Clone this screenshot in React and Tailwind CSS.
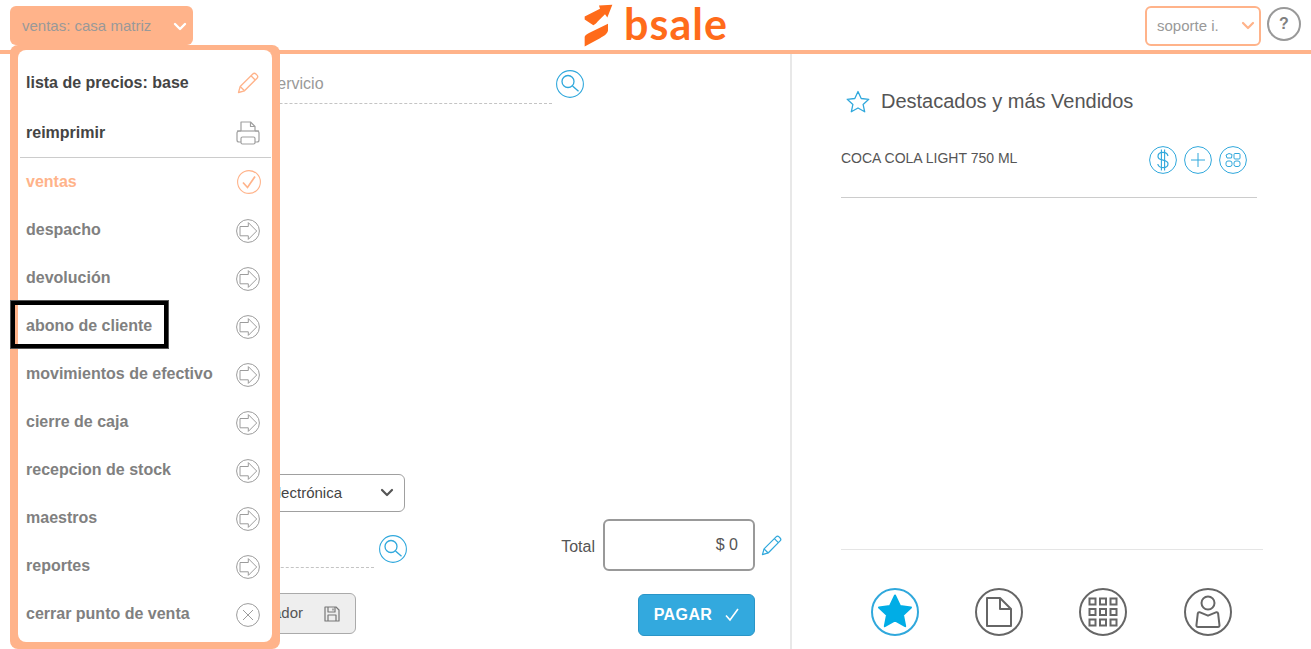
import React from "react";

const menuItems = [
  { label: "despacho" },
  { label: "devolución" },
  { label: "abono de cliente" },
  { label: "movimientos de efectivo" },
  { label: "cierre de caja" },
  { label: "recepcion de stock" },
  { label: "maestros" },
  { label: "reportes" },
];

const Chevron = ({ className, color, width = 2 }) => (
  <svg viewBox="0 0 14 10" className={className} fill="none" stroke={color} strokeWidth={width} strokeLinecap="round" strokeLinejoin="round">
    <path d="M2 2l5 5 5-5" />
  </svg>
);

const ArrowIcon = () => (
  <svg viewBox="0 0 24 24" className="w-6 h-6 mt-px mr-px" fill="none" stroke="#9c9c9c" strokeWidth="1">
    <circle cx="12" cy="12" r="11.4" />
    <path d="M4 7.5h8.3V3.6l8.4 8.4-8.4 8.4v-3.6H4z" strokeLinejoin="round" />
  </svg>
);

const CloseIcon = () => (
  <svg viewBox="0 0 24 24" className="w-6 h-6 mt-px mr-px" fill="none" stroke="#9c9c9c" strokeWidth="1">
    <circle cx="12" cy="12" r="11.4" />
    <path d="M7 7l10 10M17 7L7 17" />
  </svg>
);

const CheckIcon = () => (
  <svg viewBox="0 0 24 24" className="w-6 h-6" fill="none" stroke="#ffb38a" strokeWidth="1.1">
    <circle cx="12" cy="12" r="11.4" />
    <path d="M6 12.5l4.5 5L18 6.5" strokeWidth="1.7" />
  </svg>
);

const PencilIcon = ({ color, className }) => (
  <svg viewBox="0 0 22 22" className={className} fill="none" stroke={color} strokeWidth="1.3" strokeLinejoin="round">
    <path d="M1.5 20.5l1.7-6L15.8 2a2.2 2.2 0 013.1 0l1.1 1.1a2.2 2.2 0 010 3.1L7.5 18.8z" />
    <path d="M3.2 14.5l4.3 4.3M14 3.8l4.2 4.2" />
  </svg>
);

const PrinterIcon = () => (
  <svg viewBox="0 0 24 24" className="w-6 h-6 mr-px" fill="none" stroke="#a0a0a0" strokeWidth="1.2" strokeLinejoin="round">
    <path d="M5 10V1h9.5L19 5.5V10" />
    <path d="M14.5 1v4.5H19" />
    <path d="M5 10H3a2 2 0 00-2 2v7a2 2 0 002 2h2M19 10h2a2 2 0 012 2v7a2 2 0 01-2 2h-2" />
    <path d="M1 10h22" />
    <rect x="5" y="16" width="14" height="7" rx="1.5" />
  </svg>
);

const SearchIcon = () => (
  <svg viewBox="0 0 28 28" className="w-7 h-7" fill="none" stroke="#30a8dc" strokeWidth="1.1">
    <circle cx="14" cy="14" r="13.4" />
    <circle cx="12" cy="11.5" r="6" strokeWidth="1.3" />
    <path d="M16.5 16l6 5.2" strokeWidth="1.4" />
  </svg>
);

const SmallCircle = ({ children }) => (
  <svg viewBox="0 0 28 28" className="w-7 h-7" fill="none" stroke="#30a8dc" strokeWidth="1">
    <circle cx="14" cy="14" r="13.4" />
    {children}
  </svg>
);

const BigCircle = ({ color = "#666666", children }) => (
  <svg viewBox="0 0 48 48" className="w-12 h-12" fill="none" stroke={color} strokeWidth="2">
    <circle cx="24" cy="24" r="23" />
    {children}
  </svg>
);

const Logo = () => (
  <div className="flex items-start gap-[11px] pl-px">
    <svg viewBox="135 10 87 128" className="w-[29px] h-[43px]" fill="#ff6b1a">
      <path d="M137 47l46-23-3-10 40-2-15 38-7-10-22 22c-4 5-8 9-13 11l-26-17z" />
      <path d="M207 69v20c-3 12-12 16-24 23l-46 25v-29c2-6 8-9 16-13z" />
    </svg>
    <span className="font-['Lato','Liberation_Sans',sans-serif] font-bold text-[43px] leading-[40px] text-[#ff6b1a] tracking-[1px]">bsale</span>
  </div>
);

const MenuRow = ({ label, icon, textColor = "text-[#808080]", height = "h-12" }) => (
  <div className={`flex items-center justify-between pl-2 pr-[11px] ${height}`}>
    <span className={`text-base font-bold ${textColor}`}>{label}</span>
    {icon}
  </div>
);

export default function App() {
  return (
    <div className="relative h-[649px] w-full overflow-hidden bg-white font-['Liberation_Sans',Arial,sans-serif]">
      {/* Top bar */}
      <header className="grid grid-cols-[1fr_auto_1fr] h-[54px] border-b-4 border-[#ffb38a]">
        <div className="pl-[10px] pt-[6px]">
          <div className="flex items-center justify-between w-[183px] h-[39px] bg-[#ffb38a] rounded-md pl-3 pr-[6px] pt-[2px]">
            <span className="text-[15px] text-[#999999]">ventas: casa matriz</span>
            <Chevron className="w-[14px] h-[10px]" color="#ffffff" width={2.4} />
          </div>
        </div>
        <div className="pt-[4px] h-[50px]">
          <Logo />
        </div>
        <div className="flex justify-end items-start pt-[6px] pr-[10px] gap-[6px]">
          <div className="flex items-center justify-between w-[116px] h-[40px] border-2 border-[#ffb38a] rounded-md pl-[10px] pr-[4px]">
            <span className="text-[15px] text-[#999999]">soporte i.</span>
            <Chevron className="w-[14px] h-[10px]" color="#ffb38a" width={2.2} />
          </div>
          <div className="flex items-center justify-center w-[34px] h-[34px] mt-px rounded-full border-2 border-[#999999] text-base font-bold text-[#808080]">?</div>
        </div>
      </header>

      <main className="flex h-[595px]">
        {/* Sale column */}
        <section className="flex flex-col w-[790px] pl-5 pr-[206px]">
          <div className="flex items-start gap-1 pt-[16px]">
            <div className="w-[532px] h-[34px] pt-[2px] pl-[115px] border-b border-dashed border-[#c4c4c4] text-base text-[#999999] whitespace-nowrap">
              Buscar producto o servicio
            </div>
            <SearchIcon />
          </div>

          <div className="mt-auto flex flex-col pb-[13px] w-[735px]">
            <div className="flex items-center justify-end w-[385px] h-[38px] border border-[#a0a0a0] rounded-md pr-[10px]">
              <span className="text-[15px] text-[#444444] whitespace-nowrap mr-[38px]">Boleta electrónica</span>
              <Chevron className="w-[14px] h-[10px]" color="#555555" width={2.2} />
            </div>

            <div className="flex items-start justify-between mt-[7px]">
              <div className="flex items-start gap-[5px] pt-[16px]">
                <div className="w-[354px] h-[33px] border-b border-dashed border-[#c4c4c4]" />
                <SearchIcon />
              </div>
              <div className="flex items-center">
                <span className="text-base text-[#555555] mr-[8px] mt-[3px]">Total</span>
                <div className="flex items-center justify-end w-[152px] h-[52px] border-2 border-[#999999] rounded-md pr-[15px] text-base text-[#555555]">$ 0</div>
                <PencilIcon color="#30a8dc" className="w-[21px] h-[21px] ml-[6px] mr-[-27px]" />
              </div>
            </div>

            <div className="flex items-start justify-between mt-[23px]">
              <div className="flex items-center justify-end gap-[21px] w-[336px] h-[41px] -mt-px bg-[#eeeeee] border border-[#aaaaaa] rounded-md pr-[15px]">
                <span className="text-[15px] text-[#555555]">Guardar borrador</span>
                <svg viewBox="0 0 16 16" className="w-4 h-4" fill="none" stroke="#777777" strokeWidth="1.2" strokeLinejoin="round">
                  <path d="M1 1h11l3 3v11H1z" />
                  <path d="M4 1v5h7V1M9 2.5v2M4 15v-6h8v6" />
                </svg>
              </div>
              <button className="flex items-center justify-center gap-[13px] w-[117px] h-[42px] bg-[#33a9de] border border-[#2a95c7] rounded-md text-base font-bold text-white tracking-[0.4px]">
                PAGAR
                <svg viewBox="0 0 14 14" className="w-[14px] h-[14px]" fill="none" stroke="#ffffff" strokeWidth="1.6">
                  <path d="M1 7.5l4 4.5 8-11" />
                </svg>
              </button>
            </div>
          </div>
        </section>

        {/* Featured column */}
        <section className="flex flex-col flex-1 border-l-2 border-[#e8e8e8] pl-[49px] pr-[48px]">
          <div className="flex items-center gap-[11px] pt-[33px] pl-[5px]">
            <svg viewBox="0 0 24 23" className="w-6 h-[23px]" fill="none" stroke="#30a8dc" strokeWidth="1.3" strokeLinejoin="round">
              <path d="M12 1.5l3.2 7 7.6.8-5.7 5.1 1.6 7.4-6.7-3.8-6.7 3.8 1.6-7.4L1.2 9.3l7.6-.8z" />
            </svg>
            <h2 className="text-xl font-normal text-[#555555]">Destacados y más Vendidos</h2>
          </div>

          <div className="flex items-start justify-between h-[52px] w-[416px] mt-[31px] border-b border-[#cccccc]">
            <span className="text-sm text-[#555555] pt-[2px]">COCA COLA LIGHT 750 ML</span>
            <div className="flex gap-[7px] mr-[10px]">
              <SmallCircle>
                <path d="M19 10c-.5-2.3-2.5-3.6-5-3.6-2.9 0-5 1.6-5 4 0 5.2 10 2.4 10 7.4 0 2.4-2.2 3.8-5 3.8-2.8 0-4.8-1.4-5.2-3.6" strokeWidth="1.2" />
                <path d="M12.4 3.5v21M15.6 3.5v21" strokeWidth="1.1" />
              </SmallCircle>
              <SmallCircle>
                <path d="M14 7v14M7 14h14" />
              </SmallCircle>
              <SmallCircle>
                <path d="M7 9l3-1.5 3 1-.5 3.5H8z" strokeLinejoin="round" />
                <rect x="15" y="7.5" width="6" height="5.5" rx="1" />
                <rect x="7" y="15" width="6" height="5.5" rx="2" />
                <rect x="15" y="15" width="6" height="5.5" rx="2" />
              </SmallCircle>
            </div>
          </div>

          <div className="mt-auto w-[422px] border-t border-[#e5e5e5] pt-[38px] pb-[13px] pl-[30px] flex gap-14">
            <BigCircle color="#30a8dc">
              <path d="M24 7.5l5 10.5 11 1.4-8 7.6 2.2 11.2L24 32.3l-10.2 5.9L16 27l-8-7.6 11-1.4z" fill="#00ade6" stroke="#00ade6" strokeLinejoin="round" />
            </BigCircle>
            <BigCircle>
              <path d="M12 10h13l11 11v17H12z" strokeLinejoin="round" />
              <path d="M25 10v11h11" strokeLinejoin="round" />
            </BigCircle>
            <BigCircle>
              <rect x="10.5" y="10.5" width="6" height="6" />
              <rect x="21" y="10.5" width="6" height="6" />
              <rect x="31.5" y="10.5" width="6" height="6" />
              <rect x="10.5" y="21" width="6" height="6" />
              <rect x="21" y="21" width="6" height="6" />
              <rect x="31.5" y="21" width="6" height="6" />
              <rect x="10.5" y="31.5" width="6" height="6" />
              <rect x="21" y="31.5" width="6" height="6" />
              <rect x="31.5" y="31.5" width="6" height="6" />
            </BigCircle>
            <div className="ml-px">
              <BigCircle>
                <circle cx="24" cy="15" r="6.5" />
                <path d="M15.5 24.2L24 27.7l8.5-3.5a1.5 1.5 0 011.6 1.2l1.4 12a1.5 1.5 0 01-1.5 1.6H13.9a1.5 1.5 0 01-1.5-1.6l1.4-12a1.5 1.5 0 011.7-1.2z" strokeLinejoin="round" />
              </BigCircle>
            </div>
          </div>
        </section>
      </main>

      {/* Open menu over the sale column */}
      <nav className="absolute left-[10px] top-[45px] w-[270px] h-[604px] bg-[#ffb38a] rounded-lg px-2 pt-[5px] pb-[7px]">
        <div className="h-full bg-white rounded-lg pt-[8px]">
          <MenuRow
            label="lista de precios: base"
            textColor="text-[#444444]"
            height="h-[50px]"
            icon={<PencilIcon color="#ffb38a" className="w-[22px] h-[22px] mr-[2px]" />}
          />
          <MenuRow label="reimprimir" textColor="text-[#444444]" height="h-[49px]" icon={<PrinterIcon />} />
          <div className="border-t border-[#cccccc] ml-[2px] mr-px" />
          <MenuRow label="ventas" textColor="text-[#ffb38a]" icon={<CheckIcon />} />
          {menuItems.map((item) => (
            <MenuRow key={item.label} label={item.label} icon={<ArrowIcon />} />
          ))}
          <MenuRow label="cerrar punto de venta" icon={<CloseIcon />} />
        </div>
      </nav>

      {/* Highlight box drawn on top of the menu */}
      <div className="absolute left-[10px] top-[300px] w-[159px] h-[49px] border-[5px] border-black outline outline-1 -outline-offset-1 outline-[#555555]" />
    </div>
  );
}
